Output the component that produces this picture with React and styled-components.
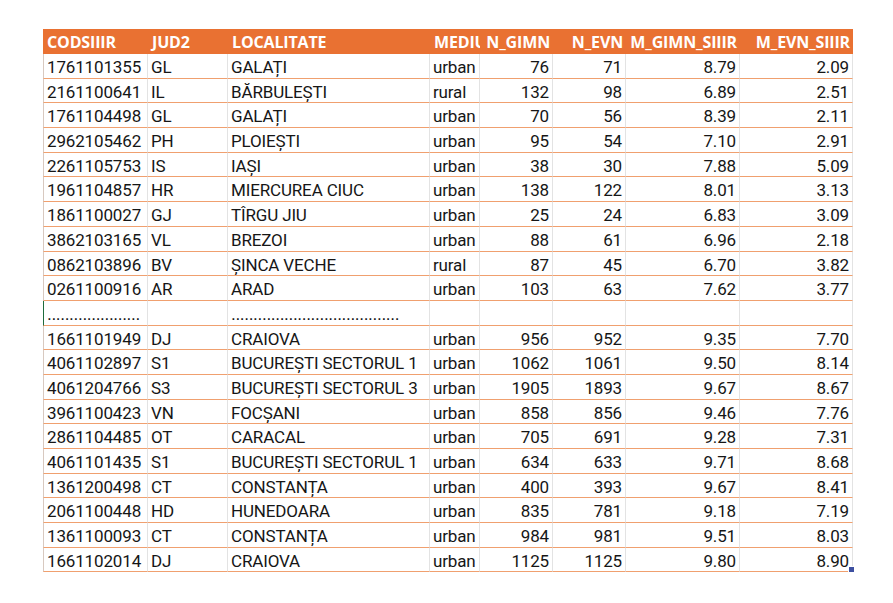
import styled, { createGlobalStyle } from "styled-components";

const GlobalStyle = createGlobalStyle`
  body {
    margin: 0;
    background: #ffffff;
  }
`

const Page = styled.div`
  padding: 29px 0 0 43px;
  background: #ffffff;
  min-height: 603px;
  box-sizing: border-box;
`

const Sheet = styled.div`
  display: grid;
  grid-template-columns: 105px 80px 202px 50px 73px 73px 114px 113px;
  grid-template-rows: 25px;
  grid-auto-rows: 24.7px;
  width: 810px;
  position: relative;
`

const HeadCell = styled.div`
  background: #e97132;
  color: #ffffff;
  font-family: "Open Sans", "Liberation Sans", sans-serif;
  font-weight: 700;
  font-size: 16px;
  line-height: 26px;
  padding: 0 ${p => p.$right ? '3px' : '0'} 0 ${p => p.$right ? '0' : '4px'};
  text-align: ${p => p.$right ? 'right' : 'left'};
  white-space: nowrap;
  overflow: hidden;
  box-sizing: border-box;
  letter-spacing: -0.15px;
`

const Cell = styled.div`
  font-family: Roboto, "Liberation Sans", sans-serif;
  font-size: 17px;
  letter-spacing: -0.15px;
  color: #161616;
  line-height: 26px;
  box-sizing: border-box;
  border-bottom: 1px solid #f0a06f;
  border-right: 1px solid #e3e3e3;
  border-left: ${p => p.$first ? `1px solid ${p.$mark ? '#1e6b3c' : '#d8c9c0'}` : 'none'};
  padding: 0 ${p => p.$right ? '3px' : '0'} 0 ${p => p.$first ? '3px' : '3px'};
  text-align: ${p => p.$right ? 'right' : 'left'};
  white-space: nowrap;
  overflow: hidden;
`

const Dots = styled.span`
  font-family: "Liberation Sans", sans-serif;
  letter-spacing: -0.3px;
`

const Handle = styled.div`
  position: absolute;
  right: -2px;
  bottom: -1px;
  width: 5px;
  height: 5px;
  background: #3d4fa0;
  border: 1px solid #ffffff;
`

const headers = [
  ['CODSIIIR', false],
  ['JUD2', false],
  ['LOCALITATE', false],
  ['MEDIU', false],
  ['N_GIMN', true],
  ['N_EVN', true],
  ['M_GIMN_SIIIR', true],
  ['M_EVN_SIIIR', true],
]

const rows = [
  ['1761101355', 'GL', 'GALAȚI', 'urban', '76', '71', '8.79', '2.09'],
  ['2161100641', 'IL', 'BĂRBULEȘTI', 'rural', '132', '98', '6.89', '2.51'],
  ['1761104498', 'GL', 'GALAȚI', 'urban', '70', '56', '8.39', '2.11'],
  ['2962105462', 'PH', 'PLOIEȘTI', 'urban', '95', '54', '7.10', '2.91'],
  ['2261105753', 'IS', 'IAȘI', 'urban', '38', '30', '7.88', '5.09'],
  ['1961104857', 'HR', 'MIERCUREA CIUC', 'urban', '138', '122', '8.01', '3.13'],
  ['1861100027', 'GJ', 'TÎRGU JIU', 'urban', '25', '24', '6.83', '3.09'],
  ['3862103165', 'VL', 'BREZOI', 'urban', '88', '61', '6.96', '2.18'],
  ['0862103896', 'BV', 'ȘINCA VECHE', 'rural', '87', '45', '6.70', '3.82'],
  ['0261100916', 'AR', 'ARAD', 'urban', '103', '63', '7.62', '3.77'],
  'dots',
  ['1661101949', 'DJ', 'CRAIOVA', 'urban', '956', '952', '9.35', '7.70'],
  ['4061102897', 'S1', 'BUCUREȘTI SECTORUL 1', 'urban', '1062', '1061', '9.50', '8.14'],
  ['4061204766', 'S3', 'BUCUREȘTI SECTORUL 3', 'urban', '1905', '1893', '9.67', '8.67'],
  ['3961100423', 'VN', 'FOCȘANI', 'urban', '858', '856', '9.46', '7.76'],
  ['2861104485', 'OT', 'CARACAL', 'urban', '705', '691', '9.28', '7.31'],
  ['4061101435', 'S1', 'BUCUREȘTI SECTORUL 1', 'urban', '634', '633', '9.71', '8.68'],
  ['1361200498', 'CT', 'CONSTANȚA', 'urban', '400', '393', '9.67', '8.41'],
  ['2061100448', 'HD', 'HUNEDOARA', 'urban', '835', '781', '9.18', '7.19'],
  ['1361100093', 'CT', 'CONSTANȚA', 'urban', '984', '981', '9.51', '8.03'],
  ['1661102014', 'DJ', 'CRAIOVA', 'urban', '1125', '1125', '9.80', '8.90'],
]

function DotsRow() {
  return <>
    <Cell $first $mark><Dots>{'.'.repeat(21)}</Dots></Cell>
    <Cell />
    <Cell><Dots>{'.'.repeat(38)}</Dots></Cell>
    <Cell />
    <Cell />
    <Cell />
    <Cell />
    <Cell />
  </>
}

export default function App() {
  return (
    <Page>
      <GlobalStyle />
      <Sheet>
        {headers.map(([h, right]) => <HeadCell key={h} $right={right}>{h}</HeadCell>)}
        {rows.map((r, i) =>
          r === 'dots'
            ? <DotsRow key={i} />
            : r.map((v, j) => <Cell key={i + '-' + j} $first={j === 0} $right={j >= 4}>{v}</Cell>)
        )}
        <Handle />
      </Sheet>
    </Page>
  )
}
